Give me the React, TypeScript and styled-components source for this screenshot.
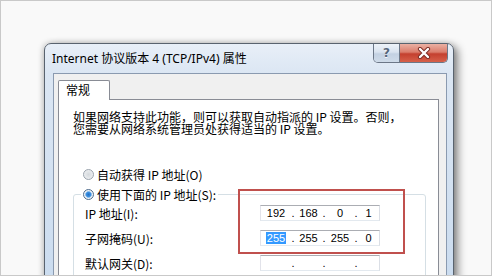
import React from "react";
import styled, { createGlobalStyle } from "styled-components";

const GlobalStyle = createGlobalStyle`
  html, body { margin: 0; padding: 0; background: #f9f9f9; }
  * { box-sizing: border-box; }
`;

const CJK = `"Noto Sans CJK SC", "Noto Sans", sans-serif`;

const Page = styled.div`
  position: relative;
  width: 492px;
  height: 276px;
  border: 1px solid #c9c9c9;
  background: #f9f9f9;
  overflow: hidden;
  padding: 42px 0 0 43px;
`;

const Window = styled.div`
  width: 410px;
  height: 300px;
  border: 1px solid #59636f;
  border-radius: 7px 7px 0 0;
  background: linear-gradient(to bottom, #e8eff8 0px, #dbe6f3 30px, #c6d9ee 100%);
  box-shadow: 4px 3px 9px rgba(0, 0, 0, 0.45), -1px 0 6px rgba(0, 0, 0, 0.18);
  display: flex;
  flex-direction: column;
  padding: 0 6px 0 8px;
`;

const TitleBar = styled.div`
  height: 29px;
  display: flex;
  align-items: flex-start;
  margin: 0 -1px;
`;

const TitleText = styled.div`
  flex: 1;
  line-height: 29px;
  font-family: "Noto Sans", "Noto Sans CJK SC", sans-serif;
  font-size: 12px;
  color: #000;
  white-space: nowrap;
`;

const CaptionButtons = styled.div`
  display: flex;
  height: 19px;
  border: 1px solid #6c7787;
  border-top: 0;
  border-radius: 0 0 5px 5px;
  overflow: hidden;
`;

const HelpButton = styled.div`
  width: 26px;
  display: flex;
  align-items: center;
  justify-content: center;
  border-right: 1px solid #6c7787;
  background: linear-gradient(to bottom, #eef3f9 0%, #d9e3ef 45%, #c3d1e2 55%, #cfdbe9 100%);
  font-family: "DejaVu Sans", sans-serif;
  font-weight: bold;
  font-size: 12px;
  color: #56667a;
  text-shadow: 0 1px 0 #f4f7fb;
`;

const CloseButton = styled.div`
  width: 47px;
  display: flex;
  align-items: center;
  justify-content: center;
  background: linear-gradient(to bottom, #eab0a3 0%, #db7d6c 45%, #c4402f 55%, #d6604a 100%);
`;

const Client = styled.div`
  flex: 1;
  display: flex;
  flex-direction: column;
  border: 1px solid #8a9ab0;
  background: #f0f0f0;
  padding: 6px 7px 0 4px;
`;

const Tab = styled.div`
  position: relative;
  z-index: 1;
  align-self: flex-start;
  width: 52px;
  height: 20px;
  margin-bottom: -1px;
  padding-left: 7px;
  border: 1px solid #898c95;
  border-bottom: 0;
  border-radius: 2px 2px 0 0;
  background: #fff;
  font-family: ${CJK};
  font-size: 12px;
  line-height: 18px;
  color: #000;
`;

const Panel = styled.div`
  flex: 1;
  background: #fff;
  border: 1px solid #898c95;
  padding: 11px 0 0 14px;
  font-family: ${CJK};
  font-size: 12px;
  color: #000;
`;

const Paragraph = styled.p`
  margin: 0;
  line-height: 12px;
  white-space: nowrap;
`;

const RadioRow = styled.div`
  display: flex;
  align-items: center;
  gap: 3px;
  height: 16px;
  margin-top: 31px;
  padding-left: 10px;
  color: #000;
  white-space: nowrap;
`;

const Radio = styled.span<{ $checked?: boolean }>`
  width: 11px;
  height: 11px;
  border-radius: 50%;
  border: 1px solid ${(p) => (p.$checked ? "#4f6c8c" : "#9aa3ad")};
  background: ${(p) =>
    p.$checked
      ? "radial-gradient(circle, #1f6fc4 0, #3c8fe0 2.2px, #9fc9f0 3.2px, #e9eff5 3.6px, #f7f8fa 100%)"
      : "radial-gradient(circle, #d4d8dc 0, #e3e6e9 3px, #f4f5f6 100%)"};
  flex: none;
`;

const GroupBox = styled.fieldset`
  width: 353px;
  margin: 4px 0 0 0;
  padding: 3px 0 20px 7px;
  border: 1px solid #d5dfe5;
  border-radius: 3px;
  min-width: 0;
`;

const Legend = styled.legend`
  display: flex;
  align-items: center;
  gap: 3px;
  height: 16px;
  padding: 0 2px;
  white-space: nowrap;
`;

const Rows = styled.div`
  display: flex;
  flex-direction: column;
  gap: 9px;
  margin-left: 4px;
`;

const FieldRow = styled.div`
  display: flex;
  align-items: center;
  height: 16px;
`;

const Label = styled.span`
  width: 175px;
  white-space: nowrap;
`;

const IpField = styled.div`
  width: 120px;
  height: 16px;
  border: 1px solid;
  border-color: #abadb3 #dbdfe6 #e3e9ef #e2e3ea;
  background: #fff;
  display: grid;
  grid-template-columns: 30px 4px 27px 4px 28px 4px 1fr;
  align-items: center;
  font-family: "Liberation Sans", Arial, sans-serif;
  font-size: 11px;
  line-height: 14px;
  color: #000;
`;

const Segment = styled.span`
  text-align: center;
`;

const Dot = styled.span`
  text-align: center;
`;

const Selected = styled.span`
  background: #3399ff;
  color: #fff;
  padding: 0 1px;
`;

const Annotation = styled.div`
  position: absolute;
  left: 237px;
  top: 188px;
  width: 167px;
  height: 65px;
  border: 2px solid #c0504d;
  pointer-events: none;
`;

const CloseIcon = () => (
  <svg width="14" height="12" viewBox="0 0 14 12">
    <path
      d="M3 2 L11 10 M11 2 L3 10"
      stroke="#7a2a22"
      strokeWidth="4.2"
      strokeLinecap="round"
      fill="none"
    />
    <path
      d="M3 2 L11 10 M11 2 L3 10"
      stroke="#ffffff"
      strokeWidth="2.4"
      strokeLinecap="round"
      fill="none"
    />
  </svg>
);

type Ip = { parts: string[]; selectFirst?: boolean };

const IpInput = ({ parts, selectFirst }: Ip) => (
  <IpField>
    {parts.map((p, i) => (
      <React.Fragment key={i}>
        {i > 0 && <Dot>.</Dot>}
        <Segment>{i === 0 && selectFirst && p ? <Selected>{p}</Selected> : p}</Segment>
      </React.Fragment>
    ))}
  </IpField>
);

export default function App() {
  return (
    <>
      <GlobalStyle />
      <Page>
        <Window>
          <TitleBar>
            <TitleText>Internet 协议版本 4 (TCP/IPv4) 属性</TitleText>
            <CaptionButtons>
              <HelpButton>?</HelpButton>
              <CloseButton>
                <CloseIcon />
              </CloseButton>
            </CaptionButtons>
          </TitleBar>
          <Client>
            <Tab>常规</Tab>
            <Panel>
              <Paragraph>
                如果网络支持此功能，则可以获取自动指派的 IP 设置。否则，
                <br />
                您需要从网络系统管理员处获得适当的 IP 设置。
              </Paragraph>
              <RadioRow>
                <Radio />
                自动获得 IP 地址(O)
              </RadioRow>
              <GroupBox>
                <Legend>
                  <Radio $checked />
                  使用下面的 IP 地址(S):
                </Legend>
                <Rows>
                  <FieldRow>
                    <Label>IP 地址(I):</Label>
                    <IpInput parts={["192", "168", "0", "1"]} />
                  </FieldRow>
                  <FieldRow>
                    <Label>子网掩码(U):</Label>
                    <IpInput parts={["255", "255", "255", "0"]} selectFirst />
                  </FieldRow>
                  <FieldRow>
                    <Label>默认网关(D):</Label>
                    <IpInput parts={["", "", "", ""]} />
                  </FieldRow>
                </Rows>
              </GroupBox>
            </Panel>
          </Client>
        </Window>
        <Annotation />
      </Page>
    </>
  );
}
